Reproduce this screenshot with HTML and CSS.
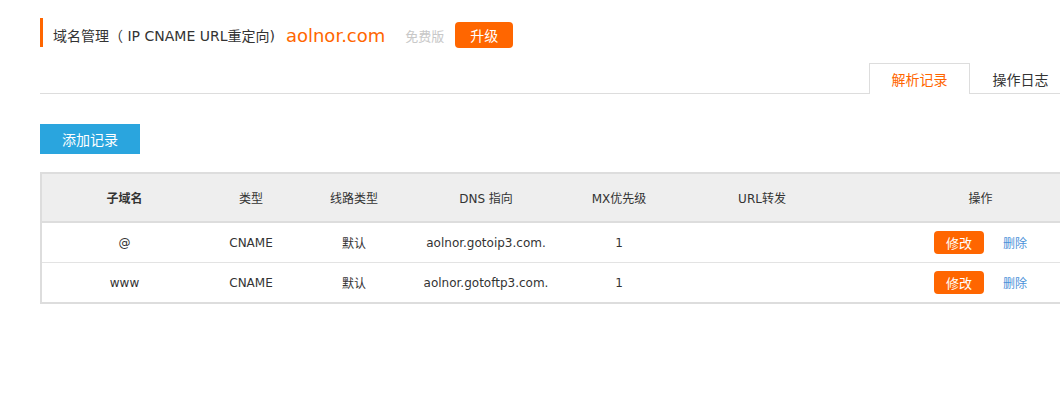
FILE: index.html
```html
<!DOCTYPE html>
<html>
<head>
    <title>域名管理</title>
    <meta charset="UTF-8">
    <link rel="stylesheet" href="styles.css">
</head>
<body>

    <div id="page">

        <div id="title_bar">
            <span class="title_text">域名管理（ IP CNAME URL重定向)</span>
            <span class="domain_name">aolnor.com</span>
            <span class="edition">免费版</span>
            <span class="upgrade_btn">升级</span>
        </div>

        <div id="tabs">
            <div class="tab tab_active">解析记录</div>
            <div class="tab">操作日志</div>
        </div>

        <div id="toolbar">
            <span class="add_btn">添加记录</span>
        </div>

        <div id="table_wrap">
            <table id="records">
                <colgroup>
                    <col style="width:166px">
                    <col style="width:88px">
                    <col style="width:118px">
                    <col style="width:146px">
                    <col style="width:120px">
                    <col style="width:166px">
                    <col style="width:272px">
                </colgroup>
                <thead>
                    <tr>
                        <th class="bold">子域名</th>
                        <th>类型</th>
                        <th>线路类型</th>
                        <th>DNS 指向</th>
                        <th>MX优先级</th>
                        <th>URL转发</th>
                        <th>操作</th>
                    </tr>
                </thead>
                <tbody>
                    <tr>
                        <td>@</td>
                        <td>CNAME</td>
                        <td>默认</td>
                        <td>aolnor.gotoip3.com.</td>
                        <td>1</td>
                        <td></td>
                        <td><span class="edit_btn">修改</span><span class="del_link">删除</span></td>
                    </tr>
                    <tr>
                        <td>www</td>
                        <td>CNAME</td>
                        <td>默认</td>
                        <td>aolnor.gotoftp3.com.</td>
                        <td>1</td>
                        <td></td>
                        <td><span class="edit_btn">修改</span><span class="del_link">删除</span></td>
                    </tr>
                </tbody>
            </table>
        </div>

    </div>

</body>
</html>
```

FILE: styles.css
```css
body{
    margin: 0px;
    background-color: white;
    font-family: "DejaVu Sans", "Noto Sans CJK SC", sans-serif;
    font-size: 12px;
    color: #333;
    overflow: hidden;
}

#page{
    width: 1031px;
    padding: 18px 0px 0px 40px;
}

#title_bar{
    display: flex;
    align-items: center;
    box-sizing: border-box;
    height: 29px;
    padding-top: 5px;
    border-left: 3px solid #f60;
    padding-left: 10px;
}

.title_text{
    font-size: 14px;
    color: #333;
}

.domain_name{
    font-size: 18px;
    color: #f60;
    margin-left: 11px;
}

.edition{
    font-size: 13px;
    color: #c8c8c8;
    margin-left: 20px;
}

.upgrade_btn{
    display: flex;
    align-items: center;
    justify-content: center;
    width: 58px;
    height: 26px;
    margin-left: 11px;
    background-color: #f60;
    color: white;
    font-size: 14px;
    border-radius: 4px;
}

#tabs{
    display: flex;
    justify-content: flex-end;
    margin-top: 16px;
    height: 30px;
    border-bottom: 1px solid #ddd;
}

.tab{
    display: flex;
    align-items: center;
    justify-content: center;
    box-sizing: border-box;
    width: 101px;
    height: 30px;
    font-size: 14px;
    color: #333;
    border: 1px solid transparent;
    border-bottom: none;
    margin-bottom: -1px;
}

.tab_active{
    color: #f60;
    border-color: #ddd;
    background-color: white;
    height: 31px;
}

#toolbar{
    margin-top: 30px;
}

.add_btn{
    display: flex;
    align-items: center;
    justify-content: center;
    width: 100px;
    height: 30px;
    background-color: #2aa5de;
    color: white;
    font-size: 14px;
}

#table_wrap{
    margin-top: 18px;
    width: 1100px;
}

#records{
    border-collapse: collapse;
    table-layout: fixed;
    width: 1076px;
    border: 2px solid #ddd;
    font-size: 12px;
}

#records th{
    background-color: #eee;
    height: 47px;
    padding: 0px;
    font-weight: normal;
    text-align: center;
    border-bottom: 2px solid #ddd;
}

#records th.bold{
    font-weight: bold;
}

#records td{
    height: 39px;
    padding: 0px;
    text-align: center;
    border-bottom: 1px solid #e3e3e3;
}

.edit_btn{
    display: inline-flex;
    align-items: center;
    justify-content: center;
    width: 50px;
    height: 23px;
    background-color: #f60;
    color: white;
    font-size: 13px;
    border-radius: 4px;
    vertical-align: middle;
}

.del_link{
    color: #4a90d9;
    margin-left: 19px;
    vertical-align: middle;
}
```
